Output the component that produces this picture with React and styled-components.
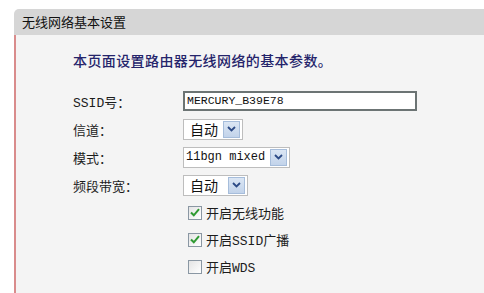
import React from 'react';
import styled, { createGlobalStyle } from 'styled-components';


const GlobalStyle = createGlobalStyle`

    html, body {
        margin:         0;
        padding:        0;
        background:     #ffffff;
    }

    body {
        font-family:    "Liberation Mono", "Noto Sans CJK SC", monospace;
        font-size:      13px;
        color:          #1c1c1c;
    }

`;


const Page = styled.div`

    padding-top:    9px;
    padding-left:   14px;
    width:          470px;
    height:         284px;
    overflow:       hidden;

`;


const Panel = styled.div`

    display:        flex;
    flex-direction: column;
    height:         100%;

`;


const Header = styled.div`

    height:                 26px;
    line-height:            26px;
    padding-left:           8px;
    background:             #d6d6d6;
    border-top-left-radius: 5px;
    font-family:            "Noto Sans CJK SC", sans-serif;
    font-size:              13px;
    color:                  #111;

`;


const Body = styled.div`

    flex:           1;
    border-left:    2px solid #d98c8c;
    background:     #f4f4f4;
    padding:        17px 0 0 57px;

`;


const Intro = styled.div`

    height:         16px;
    line-height:    16px;
    margin-bottom:  19px;
    font-family:    "Noto Sans CJK SC", sans-serif;
    font-size:      14px;
    font-weight:    500;
    letter-spacing: 0.4px;
    color:          #25246b;

`;


const Form = styled.div`

    display:                grid;
    grid-template-columns:  110px auto;
    grid-auto-rows:         28px;
    align-items:            center;

`;


const Label = styled.div`

    font-size:      13px;
    color:          #1c1c1c;

`;


const TextInput = styled.div`

    width:          228px;
    height:         16px;
    line-height:    16px;
    padding-left:   2px;
    border:         2px solid #6c7474;
    background:     #ffffff;
    font-size:      11.5px;
    color:          #111;

`;


const SelectBox = styled.div`

    display:        flex;
    align-items:    center;
    justify-content: space-between;
    box-sizing:     border-box;
    width:          ${ p => p.$width }px;
    height:         21px;
    padding:        1px 2px 1px ${ p => p.$pad }px;
    border:         1px solid #bdbdbd;
    background:     #ffffff;
    font-size:      ${ p => p.$latin ? '12px' : '14px' };
    font-family:    ${ p => p.$latin ? '"Liberation Mono", monospace' : '"Noto Sans CJK SC", sans-serif' };
    color:          #111;

`;


const ArrowButton = styled.span`

    display:        flex;
    align-items:    center;
    justify-content: center;
    width:          17px;
    height:         17px;
    box-sizing:     border-box;
    border:         1px solid #a6bddb;
    background:     linear-gradient( #dbe6f4, #c2d3ea );

`;


const CheckList = styled.div`

    display:        grid;
    grid-auto-rows: 27px;
    padding-left:   115px;

`;


const CheckRow = styled.label`

    display:        flex;
    align-items:    center;
    gap:            4px;
    font-size:      13px;
    color:          #1c1c1c;

`;


const Box = styled.span`

    display:        flex;
    align-items:    center;
    justify-content: center;
    width:          14px;
    height:         14px;
    box-sizing:     border-box;
    border:         1px solid #8a97a3;
    background:     linear-gradient( 135deg, #e4e4e4, #ffffff );

`;


const Cjk = styled.span`

    font-family:    "Noto Sans CJK SC", sans-serif;

`;


function Chevron()
{
    return (
        <svg width="9" height="6" viewBox="0 0 9 6">
            <path d="M1 1 L4.5 4.5 L8 1" fill="none" stroke="#2c4a86" strokeWidth="1.8" />
        </svg>
    );
}


function Select( { value, width, pad = 6, latin } )
{
    return (
        <SelectBox $width={ width } $pad={ pad } $latin={ latin }>
            <span>{ value }</span>
            <ArrowButton><Chevron /></ArrowButton>
        </SelectBox>
    );
}


function Check( { checked, children } )
{
    return (
        <CheckRow>
            <Box>
                { checked &&
                    <svg width="10" height="9" viewBox="0 0 10 9">
                        <path d="M1 4.5 L3.8 7.3 L9 1.2" fill="none" stroke="#2f9a32" strokeWidth="2" />
                    </svg> }
            </Box>
            <span>{ children }</span>
        </CheckRow>
    );
}


export default function App()
{
    return (

        <Page>
            <GlobalStyle />

            <Panel>

                <Header>无线网络基本设置</Header>

                <Body>

                    <Intro>本页面设置路由器无线网络的基本参数。</Intro>

                    <Form>
                        <Label>SSID<Cjk>号：</Cjk></Label>
                        <TextInput>MERCURY_B39E78</TextInput>

                        <Label><Cjk>信道：</Cjk></Label>
                        <Select value="自动" width={ 60 } />

                        <Label><Cjk>模式：</Cjk></Label>
                        <Select value="11bgn mixed" width={ 107 } pad={ 2 } latin />

                        <Label><Cjk>频段带宽：</Cjk></Label>
                        <Select value="自动" width={ 65 } />
                    </Form>

                    <CheckList>
                        <Check checked><Cjk>开启无线功能</Cjk></Check>
                        <Check checked><Cjk>开启</Cjk>SSID<Cjk>广播</Cjk></Check>
                        <Check><Cjk>开启</Cjk>WDS</Check>
                    </CheckList>

                </Body>

            </Panel>
        </Page>

    );
}
